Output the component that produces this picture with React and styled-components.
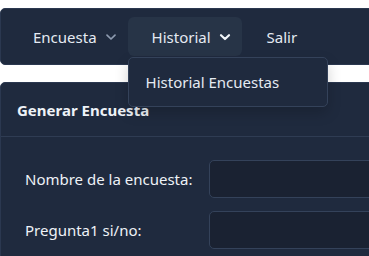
import React from 'react'
import styled, {createGlobalStyle} from 'styled-components'

const GlobalStyle = createGlobalStyle`
  html, body {
    margin: 0;
    padding: 0;
    background: #fff;
    overflow: hidden;
  }
  body {
    padding-top: 8px;
    font-family: "Noto Sans", "Open Sans", sans-serif;
  }
`

const Page = styled.div`
  width: 760px;
  display: flex;
  flex-direction: column;
  gap: 17px;
`

const Navbar = styled.nav`
  position: relative;
  display: flex;
  align-items: center;
  height: 57px;
  box-sizing: border-box;
  padding: 0 8px;
  background: #1f2a3e;
  border: 1px solid #2b3850;
  border-radius: 5px;
`

const NavItem = styled.div`
  position: relative;
  display: flex;
  align-items: center;
  gap: 8px;
  height: 39px;
  padding: ${({last}) => last ? '0 24px 0 25px' : '0 11px 0 24px'};
  border-radius: 6px;
  color: #e5eaf2;
  font-size: 15px;
  background: ${({active}) => active ? '#273447' : 'transparent'};
`

const Chevron = ({color, weight}) => (
  <svg width="12" height="12" viewBox="0 0 12 12" fill="none">
    <path d="M2 4.2 L6 8 L10 4.2" stroke={color} strokeWidth={weight} strokeLinecap="round" strokeLinejoin="round" />
  </svg>
)

const Dropdown = styled.div`
  position: absolute;
  top: 40px;
  left: 0;
  width: 200px;
  height: 50px;
  box-sizing: border-box;
  display: flex;
  align-items: center;
  padding-left: 17px;
  background: #1f2a3e;
  border: 1px solid #34425a;
  border-radius: 5px;
  box-shadow: 0 6px 14px rgba(0, 0, 0, 0.18);
  color: #e5eaf2;
  font-size: 15px;
  white-space: nowrap;
  z-index: 10;
`

const Card = styled.section`
  background: #1f2a3e;
  border: 1px solid #2b3850;
  border-radius: 5px;
  height: 200px;
`

const CardHeader = styled.header`
  height: 53px;
  display: flex;
  align-items: center;
  padding-left: 16px;
  border-bottom: 1px solid #2f3c53;
  color: #eef2f7;
  font-size: 15px;
  font-weight: 700;
`

const CardBody = styled.div`
  display: flex;
  flex-direction: column;
  gap: 13px;
  padding: 23px 0 0 24px;
`

const Row = styled.div`
  display: grid;
  grid-template-columns: 184px 1fr;
  align-items: center;
`

const Label = styled.label`
  color: #eef2f7;
  font-size: 15px;
`

const Input = styled.div`
  height: 38px;
  box-sizing: border-box;
  background: #1a2232;
  border: 1px solid #34425a;
  border-radius: 5px;
`

export default function App() {
  return (
    <>
      <GlobalStyle />
      <Page>
        <Navbar>
          <NavItem>
            Encuesta <Chevron color="#8e9bb0" weight={1.7} />
          </NavItem>
          <NavItem active>
            Historial <Chevron color="#f1f5f9" weight={2.2} />
            <Dropdown>Historial Encuestas</Dropdown>
          </NavItem>
          <NavItem last>Salir</NavItem>
        </Navbar>
        <Card>
          <CardHeader>Generar Encuesta</CardHeader>
          <CardBody>
            <Row>
              <Label>Nombre de la encuesta:</Label>
              <Input />
            </Row>
            <Row>
              <Label>Pregunta1 si/no:</Label>
              <Input />
            </Row>
          </CardBody>
        </Card>
      </Page>
    </>
  )
}
